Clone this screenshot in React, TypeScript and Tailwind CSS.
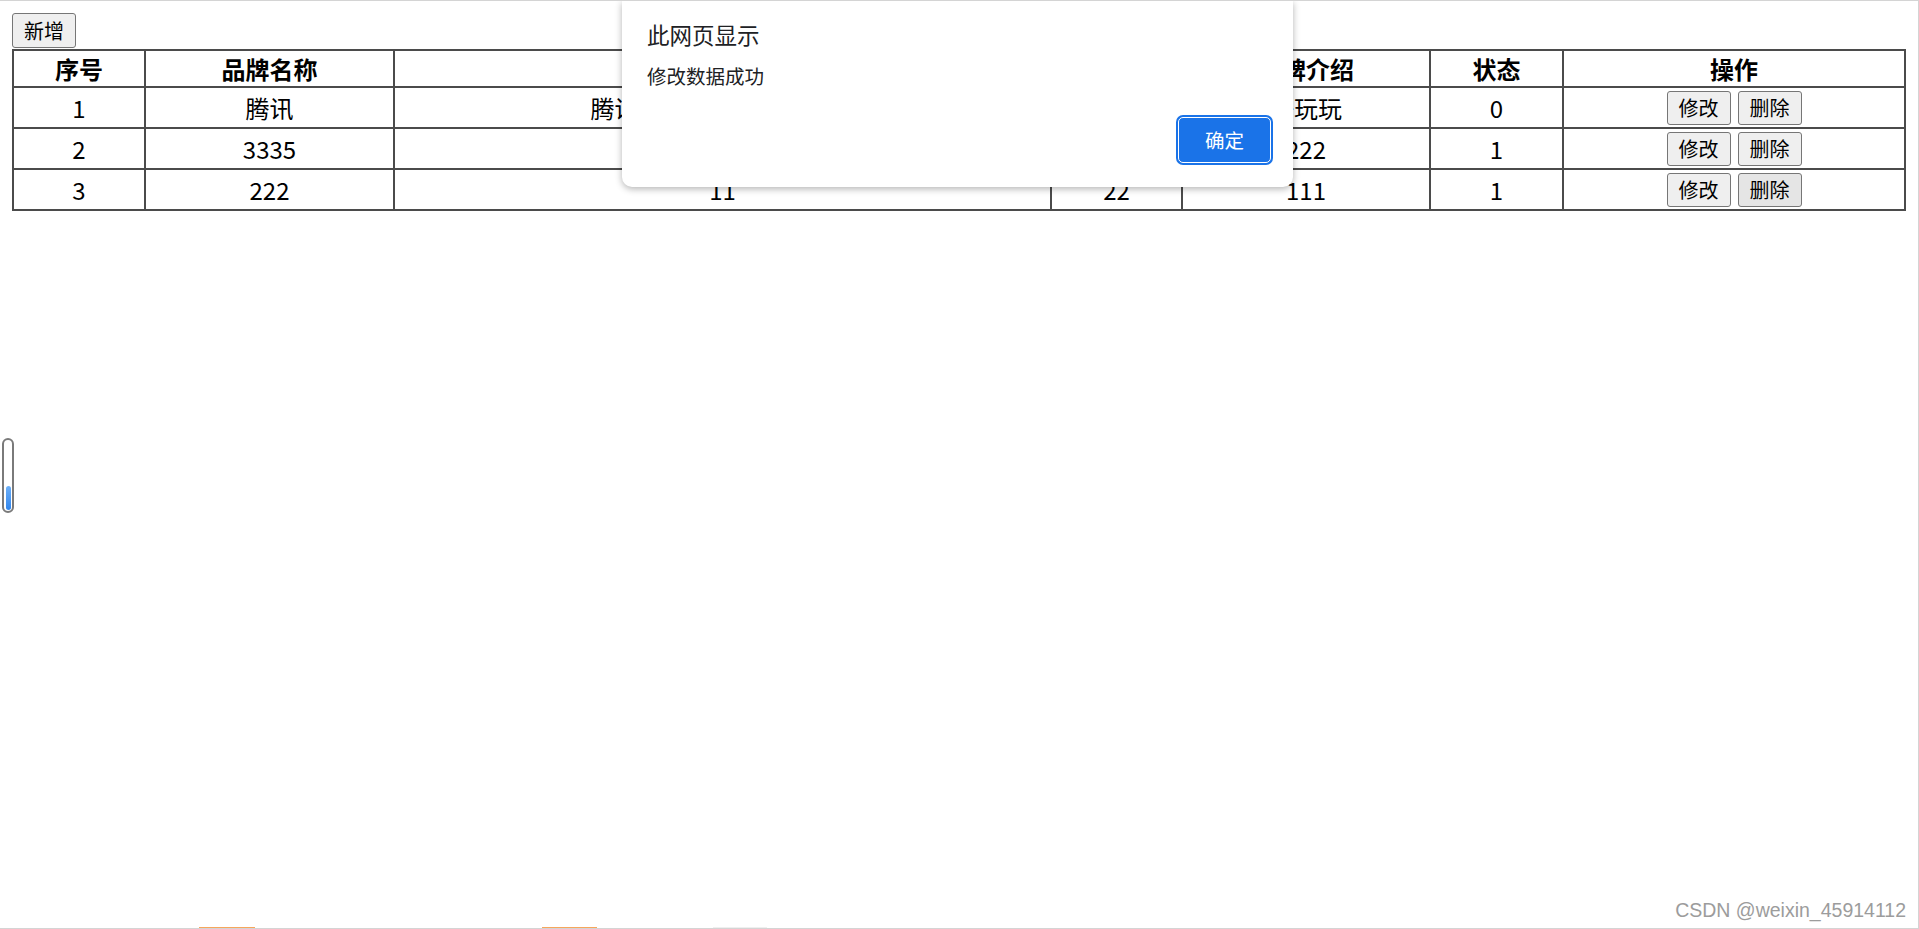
import React from 'react';

interface Brand {
  id: number;
  brandName: string;
  companyName: string;
  ordered: string;
  description: string;
  status: number;
}

const brands: Brand[] = [
  { id: 1, brandName: '腾讯', companyName: '腾讯计算机系统有限公司', ordered: '100', description: '好玩玩', status: 0 },
  { id: 2, brandName: '3335', companyName: '333', ordered: '22', description: '222', status: 1 },
  { id: 3, brandName: '222', companyName: '11', ordered: '22', description: '111', status: 1 },
];

const font = "font-['Noto_Sans_CJK_SC','Microsoft_YaHei',sans-serif]";

function GrayButton({ label, active }: { label: string; active?: boolean }) {
  return (
    <button
      className={`h-[34px] w-[64px] rounded-[3px] border border-[#767676] text-[20px] leading-none text-black ${
        active ? 'bg-[#e5e5e5]' : 'bg-[#efefef]'
      }`}
    >
      {label}
    </button>
  );
}

function App() {
  return (
    <div className={`relative h-[929px] w-full overflow-hidden border-t border-r border-b border-[#d4d4d4] bg-white text-black ${font}`}>
      <div className="flex flex-col items-start px-[12px] pt-[12px]">
        <button className="h-[35px] w-[64px] rounded-[3px] border border-[#767676] bg-[#efefef] text-[20px] leading-none">
          新增
        </button>

        {/* Brand table */}
        <table className="mt-[1px] w-full border-collapse border-2 border-[#555] text-[24px]">
          <colgroup>
            <col className="w-[132px]" />
            <col className="w-[249px]" />
            <col className="w-[657px]" />
            <col className="w-[131px]" />
            <col className="w-[248px]" />
            <col className="w-[133px]" />
            <col />
          </colgroup>
          <thead>
            <tr className="h-[37px]">
              {['序号', '品牌名称', '企业名称', '排序', '品牌介绍', '状态', '操作'].map(h => (
                <th key={h} className="border-2 border-[#4b4b4b] p-0 text-center font-bold leading-none">
                  {h}
                </th>
              ))}
            </tr>
          </thead>
          <tbody>
            {brands.map((b, i) => (
              <tr key={b.id} className="h-[41px]">
                <td className="border-2 border-[#4b4b4b] p-0 text-center leading-none">{b.id}</td>
                <td className="border-2 border-[#4b4b4b] p-0 text-center leading-none">{b.brandName}</td>
                <td className="border-2 border-[#4b4b4b] p-0 text-center leading-none">{b.companyName}</td>
                <td className="border-2 border-[#4b4b4b] p-0 text-center leading-none">{b.ordered}</td>
                <td className="border-2 border-[#4b4b4b] p-0 text-center leading-none">{b.description}</td>
                <td className="border-2 border-[#4b4b4b] p-0 text-center leading-none">{b.status}</td>
                <td className="border-2 border-[#4b4b4b] p-0 text-center leading-none">
                  <div className="flex justify-center gap-[7px]">
                    <GrayButton label="修改" />
                    <GrayButton label="删除" active={i === 2} />
                  </div>
                </td>
              </tr>
            ))}
          </tbody>
        </table>
      </div>

      {/* alert dialog */}
      <div className="absolute top-0 left-[622px] flex w-[671px] flex-col rounded-b-[10px] bg-white pt-[18px] pr-[20px] pb-[24px] pl-[25px] text-[#202124] shadow-[0_2px_7px_rgba(0,0,0,0.3)]">
        <div className="text-[22.5px] leading-[30px]">此网页显示</div>
        <div className="mt-[15px] text-[19.5px] leading-[24px]">修改数据成功</div>
        <button className="mt-[29px] mr-[2px] h-[46px] w-[93px] self-end rounded-[5px] border-[1.5px] border-white bg-[#1a73e8] text-[19.5px] leading-none text-white shadow-[0_0_0_2px_#1a73e8]">
          确定
        </button>
      </div>

      {/* floating level widget */}
      <div className="absolute top-[437px] left-[2px] flex h-[75px] w-[12px] flex-col justify-end rounded-full border-2 border-[#7a7a7a] bg-white p-[1.5px]">
        <div className="h-[24px] w-full rounded-full bg-gradient-to-b from-[#6db0f8] to-[#2f86ee]" />
      </div>

      <div className="absolute right-[12px] bottom-[8px] font-['Liberation_Sans',Arial,sans-serif] text-[19.5px] leading-none text-[#9c9c9c] [text-shadow:0_0_1px_#fff]">
        CSDN @weixin_45914112
      </div>

      <div className="absolute bottom-0 left-[199px] h-[1px] w-[56px] bg-[#f7a65c]" />
      <div className="absolute bottom-0 left-[542px] h-[1px] w-[55px] bg-[#f7a65c]" />
      <div className="absolute bottom-0 left-[713px] h-[1px] w-[54px] bg-[#efefef]" />
    </div>
  );
}

export default App;
